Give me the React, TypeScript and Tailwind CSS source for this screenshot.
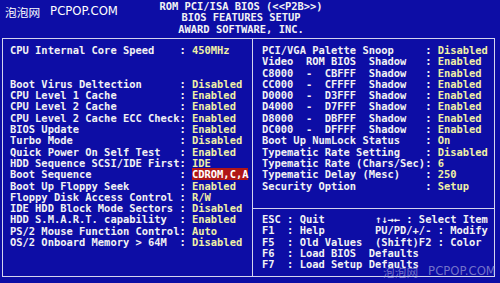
const mono = "font-['DejaVu_Sans_Mono','Liberation_Mono',monospace] text-[10.43px] font-bold";

const leftRows: [string, string][] = [
  ["CPU Internal Core Speed", "450MHz"],
  ["", ""],
  ["", ""],
  ["Boot Virus Deltection", "Disabled"],
  ["CPU Level 1 Cache", "Enabled"],
  ["CPU Level 2 Cache", "Enabled"],
  ["CPU Level 2 Cache ECC Check", "Enabled"],
  ["BIOS Update", "Enabled"],
  ["Turbo Mode", "Disabled"],
  ["Quick Power On Self Test", "Enabled"],
  ["HDD Sequence SCSI/IDE First", "IDE"],
  ["Boot Sequence", "CDROM,C,A"],
  ["Boot Up Floppy Seek", "Enabled"],
  ["Floppy Disk Access Control", "R/W"],
  ["IDE HDD Block Mode Sectors", "Disabled"],
  ["HDD S.M.A.R.T. capability", "Enabled"],
  ["PS/2 Mouse Function Control", "Auto"],
  ["OS/2 Onboard Memory > 64M", "Disabled"],
];

const rightRows: [string, string][] = [
  ["PCI/VGA Palette Snoop", "Disabled"],
  ["Video  ROM BIOS  Shadow", "Enabled"],
  ["C8000  -  CBFFF  Shadow", "Enabled"],
  ["CC000  -  CFFFF  Shadow", "Enabled"],
  ["D0000  -  D3FFF  Shadow", "Enabled"],
  ["D4000  -  D7FFF  Shadow", "Enabled"],
  ["D8000  -  DBFFF  Shadow", "Enabled"],
  ["DC000  -  DFFFF  Shadow", "Enabled"],
  ["Boot Up NumLock Status", "On"],
  ["Typematic Rate Setting", "Disabled"],
  ["Typematic Rate (Chars/Sec)", "6"],
  ["Typematic Delay (Mesc)", "250"],
  ["Security Option", "Setup"],
];

const helpRows = [
  "ESC : Quit        \u2191\u2193\u2192\u2190 : Select Item",
  "F1  : Help        PU/PD/+/- : Modify",
  "F5  : Old Values  (Shift)F2 : Color",
  "F6  : Load BIOS  Defaults",
  "F7  : Load Setup Defaults",
];

const Line = ({ children }: { children: React.ReactNode }) => (
  <div className="h-[11.3px] leading-[11.3px] whitespace-pre">{children}</div>
);

const Row = ({ label, value, pad }: { label: string; value: string; pad: number }) => {
  if (!label) return <Line> </Line>;
  const hl = value === "CDROM,C,A";
  return (
    <Line>
      <span className="text-[#f2f2f4]">{label.padEnd(pad)}: </span>
      <span className={hl ? "bg-[#b01616] text-white" : "text-[#f0f0a6]"}>{value}</span>
    </Line>
  );
};

const Logo = ({ className }: { className: string }) => (
  <div className={`flex items-center gap-[10px] text-[11.7px] leading-none font-normal ${className}`}>
    <span className="font-['Noto_Sans_CJK_SC',sans-serif]">泡泡网</span>
    <span className="font-['DejaVu_Sans',sans-serif]">PCPOP.COM</span>
  </div>
);

export default function App() {
  return (
    <div className={`relative w-[500px] h-[283px] overflow-hidden bg-[#0d0da5] text-[#f2f2f4] ${mono}`}>
      <header className="flex h-[38px]">
        <div className="w-[155px] pl-[5px] pt-[6px]">
          <Logo className="text-white" />
        </div>
        <div className="w-[172px] text-center pt-[1px]">
          <Line>ROM PCI/ISA BIOS (&lt;&lt;P2B&gt;&gt;)</Line>
          <Line>BIOS FEATURES SETUP</Line>
          <Line>AWARD SOFTWARE, INC.</Line>
        </div>
      </header>

      <main className="ml-[2px] w-[493px] h-[239px] border border-[#d4d4ee] flex">
        <section className="w-[250px] border-r border-[#d4d4ee] pl-[7px] pt-[6px]">
          {leftRows.map(([l, v], i) => (
            <Row key={i} label={l} value={v} pad={27} />
          ))}
        </section>
        <section className="flex-1 flex flex-col">
          <div className="h-[170px] border-b border-[#d4d4ee] pl-[9px] pt-[6px]">
            {rightRows.map(([l, v], i) => (
              <Row key={i} label={l} value={v} pad={26} />
            ))}
          </div>
          <div className="pl-[9px] pt-[5px] text-[#f2f2f4]">
            {helpRows.map((h, i) => (
              <Line key={i}>{h}</Line>
            ))}
          </div>
        </section>
      </main>

      <Logo className="absolute left-[383px] top-[266px] text-[#b8b8e0]/60" />
    </div>
  );
}
